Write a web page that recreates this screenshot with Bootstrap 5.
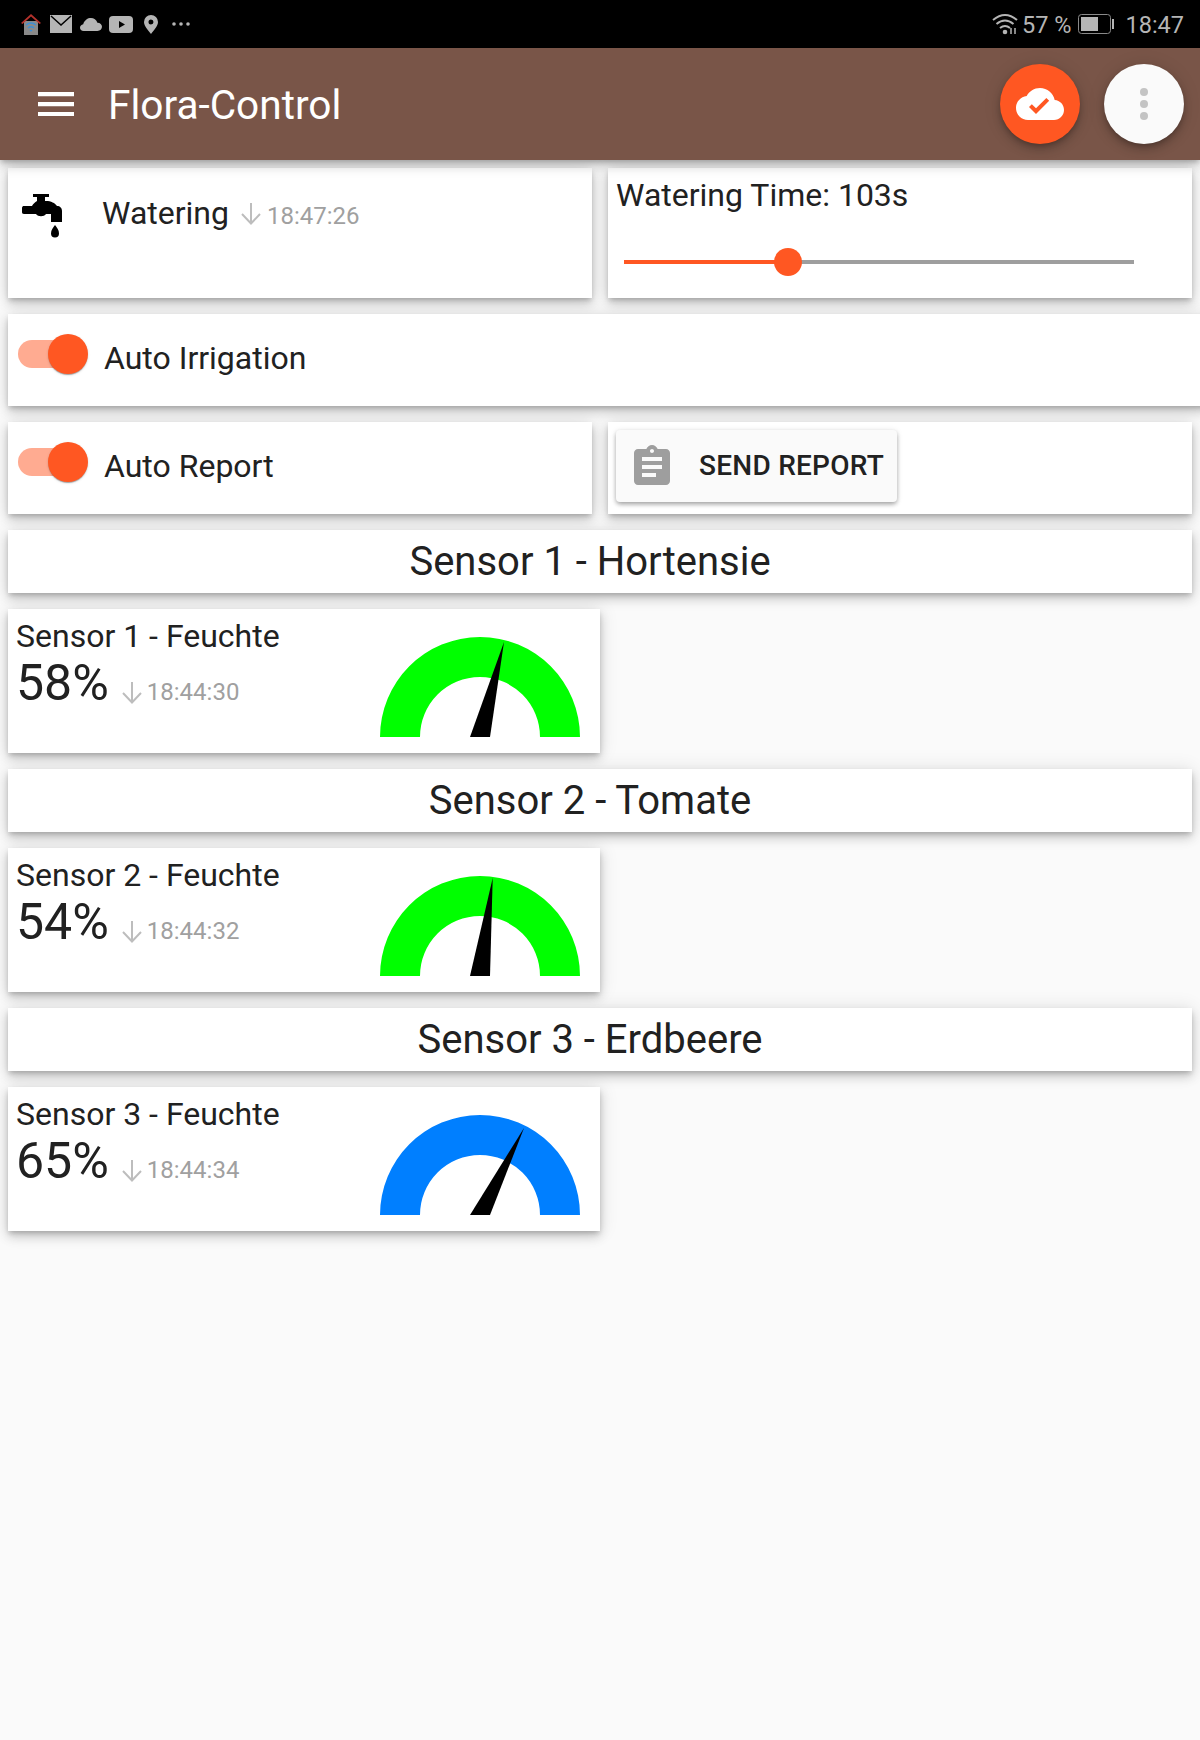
<!DOCTYPE html>
<html lang="en">
<head>
<meta charset="utf-8">
<title>Flora-Control</title>
<link href="https://cdn.jsdelivr.net/npm/bootstrap@5.3.0/dist/css/bootstrap.min.css" rel="stylesheet">
<style>
html,body{height:100%;}
body{background:#fafafa;font-family:Roboto,"Liberation Sans",sans-serif;color:#212121;overflow:hidden;}
.statusbar{height:48px;background:#000;color:#b5b5b5;font-size:23.5px;padding:0 16px 0 21px;}
.statusbar svg{display:block;}
.status-text{padding-top:4px;}
.appbar{height:112px;background:#795548;color:#fff;padding:0 16px 0 38px;position:relative;z-index:5;box-shadow:0 3px 5px -1px rgba(0,0,0,.2),0 6px 10px 0 rgba(0,0,0,.14),0 1px 18px 0 rgba(0,0,0,.12);}
.burger{width:36px;height:24px;}
.app-title{font-size:40.6px;font-weight:400;margin:2px 0 0 34px;line-height:1;}
.fab-round{width:80px;height:80px;border-radius:50%;border:0;padding:0;box-shadow:0 3px 5px -1px rgba(0,0,0,.2),0 6px 10px 0 rgba(0,0,0,.14),0 1px 18px 0 rgba(0,0,0,.12);}
.fab-orange{background:#ff5722;}
.fab-white{background:#fafafa;}
.board{padding:8px 0 0 8px;gap:16px;}
.tile{background:#fff;border:0;border-radius:0;box-shadow:0 3px 5px -1px rgba(0,0,0,.2),0 6px 10px 0 rgba(0,0,0,.14),0 1px 18px 0 rgba(0,0,0,.12);}
.half{width:584px;}
.sensor-tile{width:592px;height:144px;padding:10px 20px 16px 8px;}
.h130{height:130px;}
.h92{height:92px;}
.h63{height:63px;}
.row16{gap:16px;}
.label-32{font-size:32px;line-height:1;}
.stamp{font-size:24px;color:#a0a0a0;line-height:1;}
.water-tile{padding:26px 0 0 14px;}
.tap{width:40px;height:44px;flex:none;}
.water-name{margin-left:40px;margin-right:12px;padding-top:3px;}
.time-tile{padding:9px 0 0 8px;}
.slide-track{position:relative;height:4px;width:510px;margin:49px 0 0 8px;background:#9e9e9e;}
.slide-fill{height:4px;background:#ff5722;}
.slide-knob{position:absolute;top:-12px;width:28px;height:28px;margin-left:-14px;border-radius:50%;background:#ff5722;}
.toggle-wrap{position:relative;width:70px;height:40px;flex:none;margin:0 16px 0 10px;}
.toggle-track{position:absolute;left:0;top:6px;width:60px;height:28px;border-radius:14px;background:#ffab91;}
.toggle-knob{position:absolute;left:30px;top:0;width:40px;height:40px;border-radius:50%;background:#ff5722;box-shadow:0 2px 1px -1px rgba(0,0,0,.2),0 1px 1px 0 rgba(0,0,0,.14),0 1px 3px 0 rgba(0,0,0,.12);}
.toggle-tile{padding:20px 0 0 0;}
.toggle-label{padding-top:8px;}
.report-tile{padding:8px;}
.send-btn{width:281px;height:72px;background:#fafafa;border:0;border-radius:4px;color:#212121;font-size:28px;font-weight:500;letter-spacing:.25px;padding:0 12px;box-shadow:0 3px 5px -1px rgba(0,0,0,.2),0 2px 4px 0 rgba(0,0,0,.14),0 1px 6px 0 rgba(0,0,0,.12);}
.send-btn svg{margin:2px 23px 0 0;}
.head-tile{font-size:40px;line-height:1;padding-right:20px;}
.s-title{font-size:32px;line-height:34px;}
.s-row{margin-top:5px;}
.s-value{font-size:50px;line-height:1;}
.s-arrow{width:20px;height:22px;margin:0 5px 4px 13px;}
.s-row .stamp{margin-bottom:4px;}
.w-arrow{width:20px;height:22px;margin:9px 6px 0 0;flex:none;}
.w-stamp{padding-top:10px;}
.gauge{width:200px;height:100px;flex:none;display:block;margin-top:18px;}
</style>
</head>
<body>
<div class="statusbar d-flex align-items-center">
  <div class="d-flex align-items-center">
    <svg width="20" height="21" viewBox="0 0 20 21" style="margin-right:9px"><rect x="3" y="7" width="14" height="14" fill="#8a8a8a"/><path d="M0 9 10 0l10 9-1.500 1L10 2.500 1.500 10z" fill="#b5322c"/><path d="M5 11q5-4 10 0M7 14q3-2.500 6 0M9 17q1-1 2 0" fill="none" stroke="#3d8fd6" stroke-width="1.600"/></svg>
    <svg width="22" height="18" viewBox="0 0 22 18" style="margin-right:8px"><rect width="22" height="18" fill="#b5b5b5"/><path d="M1 1 11 10 21 1" fill="none" stroke="#000" stroke-width="1.500"/></svg>
    <svg width="22" height="13" viewBox="0 0 24 14" style="margin-right:7px"><path d="M7 1.500C8.500.3 10 0 12 0c3 0 6 2 7 5 3 0 5 2 5 4.500S22 14 19 14H4c-2.500 0-4-1.500-4-3.500S1.500 7 3.500 6.700C4 4.500 5.500 2.700 7 1.500z" fill="#b5b5b5"/></svg>
    <svg width="24" height="17" viewBox="0 0 24 17" style="margin-right:11px"><rect width="24" height="17" rx="4" fill="#b5b5b5"/><path d="M10 5l6 3.500-6 3.500z" fill="#000"/></svg>
    <svg width="14" height="19" viewBox="0 0 14 19" style="margin-right:14px"><path fill-rule="evenodd" d="M7 0a7 7 0 0 1 7 7c0 4-4 8-7 12C4 15 0 11 0 7a7 7 0 0 1 7-7zm0 4.500a2.500 2.500 0 1 0 0 5 2.500 2.500 0 0 0 0-5z" fill="#b5b5b5"/></svg>
    <svg width="18" height="4" viewBox="0 0 18 4"><circle cx="2" cy="2" r="1.800" fill="#b5b5b5"/><circle cx="9" cy="2" r="1.800" fill="#b5b5b5"/><circle cx="16" cy="2" r="1.800" fill="#b5b5b5"/></svg>
  </div>
  <div class="ms-auto d-flex align-items-center">
    <svg width="26" height="22" viewBox="0 0 26 22" style="margin-right:4px"><path d="M1 7q12-10 24 0M4.500 11q8.500-7 17 0M8 15q5-4 10 0" fill="none" stroke="#b5b5b5" stroke-width="2"/><circle cx="13" cy="19" r="2.300" fill="#b5b5b5"/><path d="M19 15v6M23 15v6" stroke="#b5b5b5" stroke-width="1.500"/></svg>
    <span class="status-text" style="margin-right:7px">57 %</span>
    <svg width="36" height="20" viewBox="0 0 36 20" style="margin-right:11px"><rect x=".5" y=".5" width="32" height="19" rx="3" fill="none" stroke="#8a8a8a"/><rect x="3" y="3" width="17" height="14" fill="#b5b5b5"/><rect x="34" y="5" width="2" height="10" fill="#b5b5b5"/></svg>
    <span class="status-text">18:47</span>
  </div>
</div>
<nav class="appbar d-flex align-items-center">
  <svg class="burger" viewBox="0 0 36 24"><path d="M0 0h36v4.300H0zM0 10h36v4.300H0zM0 20h36v4.300H0z" fill="#fff"/></svg>
  <h1 class="app-title">Flora-Control</h1>
  <div class="ms-auto d-flex" style="gap:24px">
    <button class="fab-round fab-orange d-flex align-items-center justify-content-center" type="button" aria-label="Cloud"><svg width="48" height="48" viewBox="0 0 24 24"><path d="M19.350 10.040C18.670 6.590 15.640 4 12 4 9.110 4 6.600 5.640 5.350 8.040 2.340 8.360 0 10.910 0 14c0 3.310 2.690 6 6 6h13c2.760 0 5-2.240 5-5 0-2.640-2.050-4.780-4.650-4.960zM10 17l-3.500-3.500 1.410-1.410L10 14.170 15.180 9l1.410 1.410L10 17z" fill="#fff"/></svg></button>
    <button class="fab-round fab-white d-flex align-items-center justify-content-center" type="button" aria-label="Menu"><svg width="48" height="48" viewBox="0 0 48 48"><circle cx="24" cy="12" r="4" fill="#c4c4c4"/><circle cx="24" cy="24" r="4" fill="#c4c4c4"/><circle cx="24" cy="36" r="4" fill="#c4c4c4"/></svg></button>
  </div>
</nav>
<main class="board d-flex flex-column">
  <div class="d-flex row16">
    <section class="tile half h130 water-tile d-flex align-items-start">
      <svg class="tap" viewBox="0 0 40 44" aria-hidden="true"><path d="M11 0h16v3h-4v4h1c5 0 9 2 11 5 3 0 5 2 5 5v11H29V20h-5c-2 3-8 3-10 0H2c-1.500 0-2-1-2-2v-4c0-1.500 1-2 2-2h8c1-2 3-4 5-5V3h-4z" fill="#000"/><path d="M33 31c2 3 4 5 4 8.500a4 4 0 0 1-8 0c0-3.500 2-5.500 4-8.500z" fill="#000"/></svg>
      <span class="label-32 water-name">Watering</span>
      <svg class="w-arrow" viewBox="0 0 20 22"><path d="M10 0v20M1 11l9 9.500 9-9.500" fill="none" stroke="#bdbdbd" stroke-width="2"/></svg>
      <span class="stamp w-stamp">18:47:26</span>
    </section>
    <section class="tile half h130 time-tile">
      <div class="label-32" style="padding-top:2px">Watering Time: 103s</div>
      <div class="slide-track"><div class="slide-fill" style="width:164px"></div><div class="slide-knob" style="left:164px"></div></div>
    </section>
  </div>
  <section class="tile h92 toggle-tile d-flex align-items-start" style="width:1200px">
    <span class="toggle-wrap"><span class="toggle-track"></span><span class="toggle-knob"></span></span>
    <span class="label-32 toggle-label">Auto Irrigation</span>
  </section>
  <div class="d-flex row16">
    <section class="tile half h92 toggle-tile d-flex align-items-start">
      <span class="toggle-wrap"><span class="toggle-track"></span><span class="toggle-knob"></span></span>
      <span class="label-32 toggle-label">Auto Report</span>
    </section>
    <section class="tile half h92 report-tile">
      <button class="send-btn d-flex align-items-center" type="button"><svg width="48" height="48" viewBox="0 0 24 24"><path d="M19 3h-4.180C14.400 1.840 13.300 1 12 1c-1.300 0-2.400.84-2.820 2H5c-1.100 0-2 .9-2 2v14c0 1.100.9 2 2 2h14c1.100 0 2-.9 2-2V5c0-1.100-.9-2-2-2zm-7 0c.55 0 1 .45 1 1s-.45 1-1 1-1-.45-1-1 .45-1 1-1zm2 14H7v-2h7v2zm3-4H7v-2h10v2zm0-4H7V7h10v2z" fill="#9e9e9e"/></svg>SEND REPORT</button>
    </section>
  </div>
  <section class="tile h63 head-tile d-flex align-items-center justify-content-center" style="width:1184px">Sensor 1 - Hortensie</section>
  <section class="tile sensor-tile d-flex justify-content-between">
    <div>
      <div class="s-title">Sensor 1 - Feuchte</div>
      <div class="s-row d-flex align-items-end"><span class="s-value">58%</span><svg class="s-arrow" viewBox="0 0 20 22"><path d="M10 0v20M1 11l9 9.500 9-9.500" fill="none" stroke="#bdbdbd" stroke-width="2"/></svg><span class="stamp">18:44:30</span></div>
    </div>
    <svg class="gauge" viewBox="0 0 200 100"><path d="M0 100a100 100 0 0 1 200 0h-40a60 60 0 0 0-120 0z" fill="#0f0"/><path d="M90 100 124 5 110 100z" fill="#000"/></svg>
  </section>
  <section class="tile h63 head-tile d-flex align-items-center justify-content-center" style="width:1184px">Sensor 2 - Tomate</section>
  <section class="tile sensor-tile d-flex justify-content-between">
    <div>
      <div class="s-title">Sensor 2 - Feuchte</div>
      <div class="s-row d-flex align-items-end"><span class="s-value">54%</span><svg class="s-arrow" viewBox="0 0 20 22"><path d="M10 0v20M1 11l9 9.500 9-9.500" fill="none" stroke="#bdbdbd" stroke-width="2"/></svg><span class="stamp">18:44:32</span></div>
    </div>
    <svg class="gauge" viewBox="0 0 200 100"><path d="M0 100a100 100 0 0 1 200 0h-40a60 60 0 0 0-120 0z" fill="#0f0"/><path d="M90 100 112.700 2 110 100z" fill="#000"/></svg>
  </section>
  <section class="tile h63 head-tile d-flex align-items-center justify-content-center" style="width:1184px">Sensor 3 - Erdbeere</section>
  <section class="tile sensor-tile d-flex justify-content-between">
    <div>
      <div class="s-title">Sensor 3 - Feuchte</div>
      <div class="s-row d-flex align-items-end"><span class="s-value">65%</span><svg class="s-arrow" viewBox="0 0 20 22"><path d="M10 0v20M1 11l9 9.500 9-9.500" fill="none" stroke="#bdbdbd" stroke-width="2"/></svg><span class="stamp">18:44:34</span></div>
    </div>
    <svg class="gauge" viewBox="0 0 200 100"><path d="M0 100a100 100 0 0 1 200 0h-40a60 60 0 0 0-120 0z" fill="#007fff"/><path d="M90 100 144 13 110 100z" fill="#000"/></svg>
  </section>
</main>
<script src="https://cdn.jsdelivr.net/npm/bootstrap@5.3.0/dist/js/bootstrap.bundle.min.js"></script>
</body>
</html>
